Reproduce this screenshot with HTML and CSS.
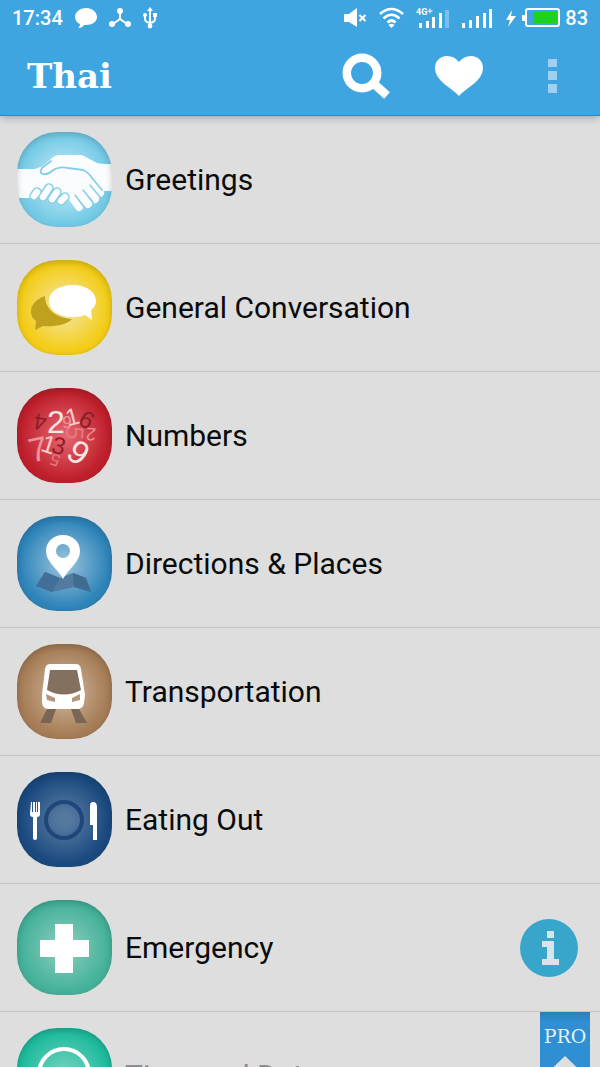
FILE: index.html
```
<!DOCTYPE html>
<html lang="en">
<head>
    <meta charset="UTF-8">
    <meta name="viewport" content="width=device-width, initial-scale=1.0">
    <title>Thai</title>
    <link rel="stylesheet" href="styles.css">
</head>
<body>

    <!-- Header -->
    <header class="header">
        <div class="status-bar">
            <span>17:34</span>
            <svg width="22" height="22" viewBox="0 0 22 22" fill="#fff"><path d="M11 1C5 1 0 5 0 10c0 3 2 6 5 7 0 2-1 3-2 4 3 0 5-1 6-3h2c6 0 11-3 11-8s-5-9-11-9z"/></svg>
            <svg width="22" height="22" viewBox="0 0 22 22" fill="#fff"><path d="M11 4v9M11 12l-7 5M11 12l7 5" stroke="#fff" stroke-width="2"/><circle cx="11" cy="4" r="3"/><circle cx="3" cy="17" r="3"/><circle cx="19" cy="17" r="3"/></svg>
            <svg width="14" height="22" viewBox="0 0 14 22" fill="#fff"><path d="M7 4v15M2 8v4q0 3 5 4M12 8v4q0 3-5 4" fill="none" stroke="#fff" stroke-width="2"/><path d="M7 0l3 4H4z"/><circle cx="7" cy="19" r="2.4"/><circle cx="2" cy="8" r="2"/><path d="M10 6h4v4h-4z"/></svg>

            <div class="status-right">
                <svg width="23" height="22" viewBox="0 0 23 22" fill="#fff"><path d="M0 7h5l8-6v19l-8-5H0z"/><path d="M15.500 8l6 6m0-6l-6 6" stroke="#fff" stroke-width="2"/></svg>
                <svg width="25" height="22" viewBox="0 0 25 22" fill="none" stroke="#fff" stroke-width="2.600"><path d="M1 7q11.500-10 23 0M4.500 11.500q8-7.500 16 0M8.500 15.500q4-4 8 0"/><path d="M12.500 21l-3-3q3-2.500 6 0z" fill="#fff" stroke="none"/></svg>
                <svg class="mobile" width="33" height="22" viewBox="0 0 33 22" fill="#fff"><text x="0" y="8">4G</text><path d="M14 1.500v5M11.500 4h5" stroke="#fff"/><path d="M3 16h3v5H3zM10 14h3v7h-3zM16 10h3v11h-3zM23 6h3v15h-3z"/><path d="M29 3h4v18h-4z" opacity=".3"/></svg>
                <svg width="32" height="22" viewBox="0 0 32 22" fill="#fff"><path d="M1 16h3v5H1zM8 13h3v8H8zM15 9h3v12h-3zM22 6h3v15h-3zM28 2h3v19h-3z"/></svg>
                <div class="battery">
                    <svg width="12" height="22" viewBox="0 0 12 22" fill="#fff"><path d="M7 3L1 13h4l-2 7 8-11H6z"/></svg>
                    <svg width="38" height="22" viewBox="0 0 38 22"><rect x="4" y="2" width="33" height="17" rx="2" fill="none" stroke="#fff" stroke-width="2"/><path d="M0 8h3v6H0z" fill="#fff"/><path d="M11 5h24v11H11z" fill="#1dd31a"/></svg>
                    <span>83</span>
                </div>
            </div>
        </div>

        <div class="toolbar">
            <h1>Thai</h1>
            <button type="button" class="search" aria-label="Search">
                <svg width="48" height="46" viewBox="0 0 48 46" fill="none" stroke="#fff"><circle cx="20" cy="20" r="15.200" stroke-width="8.500"/><path d="M30 29l15 13.500" stroke-width="8.500"/></svg>
            </button>
            <button type="button" class="favorites" aria-label="Favorites">
                <svg width="50" height="42" viewBox="0 0 50 42" fill="#fff"><path d="M25 41C18 33 1 26 1 13 1 6 6 1 13 1c5 0 9 2 12 6 3-4 7-6 12-6 7 0 12 5 12 12 0 13-17 20-24 28z"/></svg>
            </button>
            <button type="button" aria-label="More options">
                <svg width="10" height="36" viewBox="0 0 10 36" fill="#a0d0ef"><path d="M0 1h9v8H0zM0 13h9v9H0zM0 26h9v9H0z"/></svg>
            </button>
        </div>
    </header>

    <!-- Category list -->
    <ul class="categories">
        <li>
            <a href="#greetings">
                <span class="icon greetings">
                    <svg viewBox="0 0 95 95">
                        <path fill="#fafcfd" d="M0 37h18l8-3 9-8q3-3 8-3h22l15 8q3 1 15 1v27H84L74 64 58 66 44 62 14 66H0z"/>
                        <g fill="none" stroke-linecap="round">
                            <path d="M50 58l12 17M58 56l13 16M65 52l13 15M72 49l11 12" stroke="#fafcfd" stroke-width="8"/>
                            <path d="M58 63l9 12M66 58l10 12M73 53l10 12" stroke="#86cfe4" stroke-width="1.500"/>
                            <path d="M17 64l3-4M26 65l6-9M35 67l5-7M44 69l4-4" stroke="#86cfe4" stroke-width="9.500"/>
                            <path d="M17 64l3-4M26 65l6-9M35 67l5-7M44 69l4-4" stroke="#fafcfd" stroke-width="6.500"/>
                            <path d="M34 29l-9 7q-3 5 1 6 5 1 9-3 7-5 16-3l15 2q5 2 9 8l10 12" stroke="#86cfe4" stroke-width="1.800"/>
                        </g>
                    </svg>
                </span>
                <span class="label">Greetings</span>
            </a>
        </li>
        <li>
            <a href="#general-conversation">
                <span class="icon conversation">
                    <svg viewBox="0 0 95 95">
                        <path fill="#bfa11e" d="M28 36c-9 3-14 9-14 15 0 5 2 8 5 10l-1 9 8-4c11 1 24-1 29-7-15-1-27-9-27-23z"/>
                        <path fill="#fff" d="M56 25c-14 0-24 7-24 16s10 16 24 16c5 0 9-1 12-2l7 5-1-10c3-2 5-6 5-9 0-9-10-16-23-16z"/>
                    </svg>
                </span>
                <span class="label">General Conversation</span>
            </a>
        </li>
        <li>
            <a href="#numbers">
                <span class="icon numbers">
                    <svg viewBox="0 0 95 95" text-anchor="middle">
                        <text fill="#881f28" font-size="23" y="8" transform="translate(23 34) rotate(188)">4</text>
                        <text fill="#f0929a" font-size="34" y="12" transform="translate(21 61) rotate(-12)">7</text>
                        <text fill="#881f28" font-size="24" y="9" transform="translate(70 31) rotate(30)">6</text>
                        <text fill="#e87780" font-size="25" y="9" transform="translate(58 45) rotate(95)">5</text>
                        <text fill="#f0929a" font-size="18" y="6" transform="translate(74 46) rotate(185)">2</text>
                        <text fill="#e87780" font-size="17" y="6" transform="translate(38 72) rotate(200)">5</text>
                        <text fill="#f0929a" font-size="17" y="6" transform="translate(50 34)">9</text>
                        <text fill="#fce4e2" font-size="32" y="11" transform="translate(39 34)">2</text>
                        <text fill="#f9cfce" font-size="24" y="9" transform="translate(55 28) rotate(-15)">1</text>
                        <text fill="#f9cfce" font-size="25" y="9" transform="translate(32 56) rotate(18)">1</text>
                        <text fill="#8e1d28" font-size="24" y="9" transform="translate(42 57) rotate(15)">3</text>
                        <text fill="#fce4e2" font-size="33" y="12" transform="translate(62 64) rotate(35)">9</text>
                    </svg>
                </span>
                <span class="label">Numbers</span>
            </a>
        </li>
        <li>
            <a href="#directions">
                <span class="icon directions">
                    <svg viewBox="0 0 95 95">
                        <path fill="#537a9f" d="M28 56l15 6 13-5 13 5 5 14-17-5-22 5-16-6z"/>
                        <path fill="#426f97" d="M28 56l15 6-8 14-16-6z"/>
                        <path fill="#416c92" d="M56 57l13 5 5 14-17-5z"/>
                        <path fill="#fff" fill-rule="evenodd" d="M46 19c-10 0-17 7-17 16 0 11 11 17 17 28 6-11 17-17 17-28 0-9-7-16-17-16zm0 9a7 7 0 1 1 0 14 7 7 0 1 1 0-14z"/>
                    </svg>
                </span>
                <span class="label">Directions &amp; Places</span>
            </a>
        </li>
        <li>
            <a href="#transportation">
                <span class="icon transportation">
                    <svg viewBox="0 0 95 95">
                        <path fill="#7a6654" d="M30 65h9l-5 14H23zM54 65h8l8 14H59z"/>
                        <path fill="#fff" d="M33 20h26q4 0 5 5l4 26-1 8q-1 6-7 6H32q-6 0-7-6v-8l3-26q1-5 5-5z"/>
                        <path fill="#84705f" d="M33 26h27l4 20q-17 9-34 0z"/>
                        <path fill="#b39679" d="M29 50l9 4v4l-8-2zM63 50l-8 4v4l8-2z"/>
                    </svg>
                </span>
                <span class="label">Transportation</span>
            </a>
        </li>
        <li>
            <a href="#eating-out">
                <span class="icon eating">
                    <svg viewBox="0 0 95 95">
                        <circle cx="47" cy="48" r="18" fill="none" stroke="#21467a" stroke-width="4"/>
                        <path fill="#fff" d="M14 30h1v10h1V30h2v10h1V30h1v10h1V30h2v12q0 3-3 3v21q0 2-2 2t-2-2V45q-3 0-3-3zM76 30q4 0 4 5v33h-4V53h-3V34q0-4 3-4z"/>
                    </svg>
                </span>
                <span class="label">Eating Out</span>
            </a>
        </li>
        <li>
            <a href="#emergency">
                <span class="icon emergency">
                    <svg viewBox="0 0 95 95"><path fill="#fff" d="M38 24h18v16h16v17H56v16H38V57H23V40h15z"/></svg>
                </span>
                <span class="label">Emergency</span>
            </a>
            <button type="button" class="info" aria-label="Information">
                <svg width="58" height="58" viewBox="0 0 58 58" fill="#d7e5e9"><path d="M27 12h7v7h-7zM22 22h12v18h5v6H22v-6h5V28h-5z"/></svg>
            </button>
        </li>
        <li>
            <a href="#time-and-date" class="locked">
                <span class="icon time">
                    <svg viewBox="0 0 95 95"><circle cx="47" cy="46" r="25" fill="none" stroke="#fff" stroke-width="4"/><path d="M47 47L42 40" stroke="#fff" stroke-width="3"/></svg>
                </span>
                <span class="label">Time and Date</span>
            </a>
            <span class="pro">PRO</span>
        </li>
    </ul>

</body>
</html>
```
FILE: styles.css
```
/* General Styles */
* {
    box-sizing: border-box;
}

body {
    font-family: Roboto, sans-serif;
    margin: 0;
    height: 100vh;
    display: flex;
    flex-direction: column;
    overflow: hidden;
    background: #dedede;
    color: #0a0a0a;
}

svg {
    display: block;
}

button {
    padding: 0;
    border: none;
    background: none;
    cursor: pointer;
}

/* Header */
.header {
    flex: none;
    position: relative;
    z-index: 1;
    background: #3ea5e1;
    color: #fff;
    border-bottom: 1px solid #3187bb;
    box-shadow: 0 1px 8px rgba(0, 0, 0, 0.3);
}

.status-bar {
    display: flex;
    align-items: center;
    gap: 12px;
    height: 36px;
    padding: 0 12px;
    font-size: 20px;
    font-weight: 500;
}

.status-right {
    display: flex;
    align-items: center;
    gap: 12px;
    margin-left: auto;
}

.battery {
    display: flex;
    align-items: center;
    gap: 5px;
}

.mobile text {
    font-size: 9px;
    font-weight: bold;
}

.toolbar {
    display: flex;
    align-items: center;
    height: 79px;
    padding: 0 42px 0 27px;
}

.toolbar h1 {
    flex: 1;
    margin: 0;
    font-family: "DejaVu Serif", serif;
    font-size: 34px;
    line-height: 40px;
}

.search {
    margin-right: 44px;
}

.favorites {
    margin-right: 64px;
}

/* Category list */
.categories {
    flex: 1;
    min-height: 0;
    overflow: hidden;
    list-style: none;
    margin: 0;
    padding: 0;
}

.categories li {
    display: flex;
    align-items: center;
    height: 128px;
    border-bottom: 1px solid #c2c2c2;
}

.categories a {
    flex: 1;
    display: flex;
    align-items: center;
    gap: 13px;
    padding-left: 17px;
    color: inherit;
    text-decoration: none;
}

.label {
    font-size: 30px;
    line-height: 36px;
}

.locked .label {
    color: #8d8d8d;
}

/* Icons */
.icon {
    width: 95px;
    height: 95px;
    border-radius: 40px;
    overflow: hidden;
    position: relative;
}

/* inner shadow drawn above the artwork */
.icon::after {
    content: "";
    position: absolute;
    inset: 0;
    border-radius: 40px;
    box-shadow: inset 0 2px 6px rgba(0, 0, 0, 0.22);
}

.greetings { background: radial-gradient(circle, #b5e3f2 20%, #75cbe6 65%); }
.conversation { background: radial-gradient(circle, #f5e08c 15%, #f3cd18 65%); }
.numbers { background: radial-gradient(circle, #e2636d 5%, #bf202c 65%); }
.directions { background: radial-gradient(circle, #8dbcd8 10%, #2f85ba 65%); }
.transportation { background: radial-gradient(circle, #cbb094 10%, #a67d57 65%); }
.eating { background: radial-gradient(circle, #55789f 10%, #1b4a80 65%); }
.emergency { background: radial-gradient(circle, #83cbb9 10%, #46b29a 65%); }
.time { background: radial-gradient(circle, #6bd0bb 10%, #1fbb9d 65%); }

.numbers text {
    font-family: "Liberation Sans", sans-serif;
}

/* Info button */
.info {
    margin-right: 22px;
    border-radius: 50%;
    background: #38a6cb;
}

/* PRO ribbon */
.pro {
    align-self: flex-start;
    width: 50px;
    height: 68px;
    margin-right: 10px;
    padding-top: 12px;
    background: linear-gradient(#2a7fba, #2f8fd2 10px);
    clip-path: polygon(0 0, 100% 0, 100% 100%, 50% 44px, 0 100%);
    color: #e4f0f8;
    font-family: "DejaVu Serif", serif;
    font-size: 19px;
    line-height: 24px;
    text-align: center;
}
```
